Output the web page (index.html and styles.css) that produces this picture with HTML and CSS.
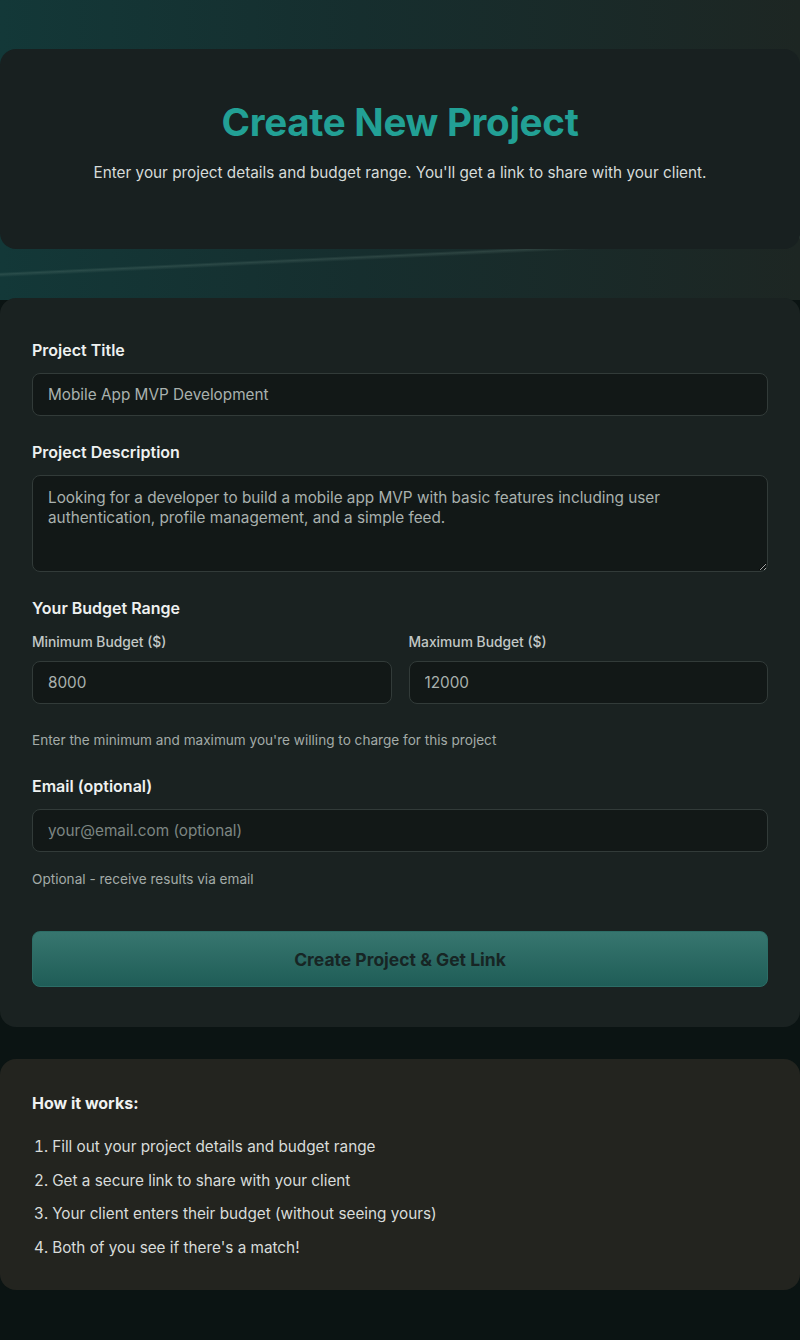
FILE: index.html
```html
<!DOCTYPE html>
<html lang="en">
<head>
    <meta charset="UTF-8">
    <meta name="viewport" content="width=device-width, initial-scale=1.0">
    <title>Create New Project</title>
    <link rel="stylesheet" href="styles.css">
</head>
<body>
    <div class="page">
        <div class="hero card">
            <h1>Create New Project</h1>
            <p>Enter your project details and budget range. You'll get a link to share with your client.</p>
        </div>

        <form class="card form-card" onsubmit="return false">
            <div class="field">
                <label for="title">Project Title</label>
                <input type="text" id="title" value="Mobile App MVP Development">
            </div>

            <div class="field">
                <label for="desc">Project Description</label>
                <textarea id="desc" rows="4">Looking for a developer to build a mobile app MVP with basic features including user authentication, profile management, and a simple feed.</textarea>
            </div>

            <div class="budget">
                <h3>Your Budget Range</h3>
                <div class="budget-grid">
                    <div>
                        <label class="sub" for="min">Minimum Budget ($)</label>
                        <input type="text" id="min" value="8000">
                    </div>
                    <div>
                        <label class="sub" for="max">Maximum Budget ($)</label>
                        <input type="text" id="max" value="12000">
                    </div>
                </div>
                <p class="hint hint-budget">Enter the minimum and maximum you're willing to charge for this project</p>
            </div>

            <div class="field">
                <label for="email">Email (optional)</label>
                <input type="text" id="email" placeholder="your@email.com (optional)">
                <p class="hint">Optional - receive results via email</p>
            </div>

            <button type="submit" class="btn">Create Project &amp; Get Link</button>
        </form>

        <div class="card how">
            <h4>How it works:</h4>
            <ol>
                <li>Fill out your project details and budget range</li>
                <li>Get a secure link to share with your client</li>
                <li>Your client enters their budget (without seeing yours)</li>
                <li>Both of you see if there's a match!</li>
            </ol>
        </div>
    </div>
</body>
</html>
```

FILE: styles.css
```css
body {
    margin: 0;
    font-family: 'Inter', 'Noto Sans', sans-serif;
    color: #e4e8e6;
    background-color: #0b1413;
    background-image:
        linear-gradient(177.3deg, transparent 272px, rgba(120, 150, 140, 0.22) 274px, transparent 277px),
        linear-gradient(90deg, #133838 0%, #162e2e 45%, #1d2623 100%);
    background-size: 100% 300px, 100% 300px;
    background-repeat: no-repeat;
}

.page {
    padding: 49px 0 50px;
}

.card {
    border-radius: 16px;
    box-sizing: border-box;
}

.hero {
    background-color: #182020;
    height: 200px;
    padding-top: 49px;
    text-align: center;
}

.hero h1 {
    margin: 0;
    font-size: 38.6px;
    line-height: 48px;
    font-weight: 700;
    color: #22a095;
    letter-spacing: -0.3px;
}

.hero p {
    margin: 15px 0 0;
    font-size: 15.3px;
    line-height: 24px;
    color: #d6dbd9;
}

.form-card {
    display: block;
    background-color: #1a2221;
    margin-top: 49px;
    padding: 40px 32px 40px;
}

.field {
    margin-bottom: 24px;
}

label, .budget h3 {
    display: block;
    font-size: 16px;
    line-height: 24px;
    font-weight: 600;
    color: #eef1f0;
    margin: 0 0 11px;
}

label.sub {
    font-size: 13.8px;
    line-height: 20px;
    font-weight: 500;
    color: #c2c8c6;
    margin-bottom: 9px;
}

input, textarea {
    display: block;
    width: 100%;
    box-sizing: border-box;
    height: 43px;
    padding: 0 15px;
    background-color: #121817;
    border: 1px solid #323b39;
    border-radius: 8px;
    color: #a9b1ae;
    font-family: inherit;
    font-size: 15.3px;
    outline: none;
}

input::placeholder {
    color: #7d8683;
}

textarea {
    height: 97px;
    padding: 12px 15px;
    line-height: 19.5px;
    resize: vertical;
}

.budget {
    margin-bottom: 24px;
}

.budget h3 {
    margin-bottom: 12px;
}

.budget-grid {
    display: grid;
    grid-template-columns: 1fr 1fr;
    gap: 17px;
}

.hint {
    margin: 17px 0 0;
    font-size: 13.6px;
    line-height: 20px;
    color: #a3aba8;
}

.hint-budget {
    margin-top: 26px;
}

.btn {
    display: block;
    width: 100%;
    height: 56px;
    margin-top: 42px;
    border: 1px solid #2c6d66;
    border-radius: 8px;
    background: linear-gradient(180deg, #37766f, #1f5d57);
    color: #172524;
    font-family: inherit;
    font-size: 17.5px;
    font-weight: 700;
    cursor: pointer;
}

.how {
    background-color: #23241f;
    margin-top: 32px;
    padding: 32px 32px 30px;
    height: 231px;
}

.how h4 {
    margin: 0 0 20px;
    font-size: 16px;
    line-height: 24px;
    font-weight: 700;
    color: #f0f2f1;
}

.how ol {
    margin: 0;
    padding: 0 0 0 2px;
    list-style-position: inside;
}

.how li {
    font-size: 15.3px;
    line-height: 24px;
    color: #d8dcda;
    margin-bottom: 9.5px;
}
```
